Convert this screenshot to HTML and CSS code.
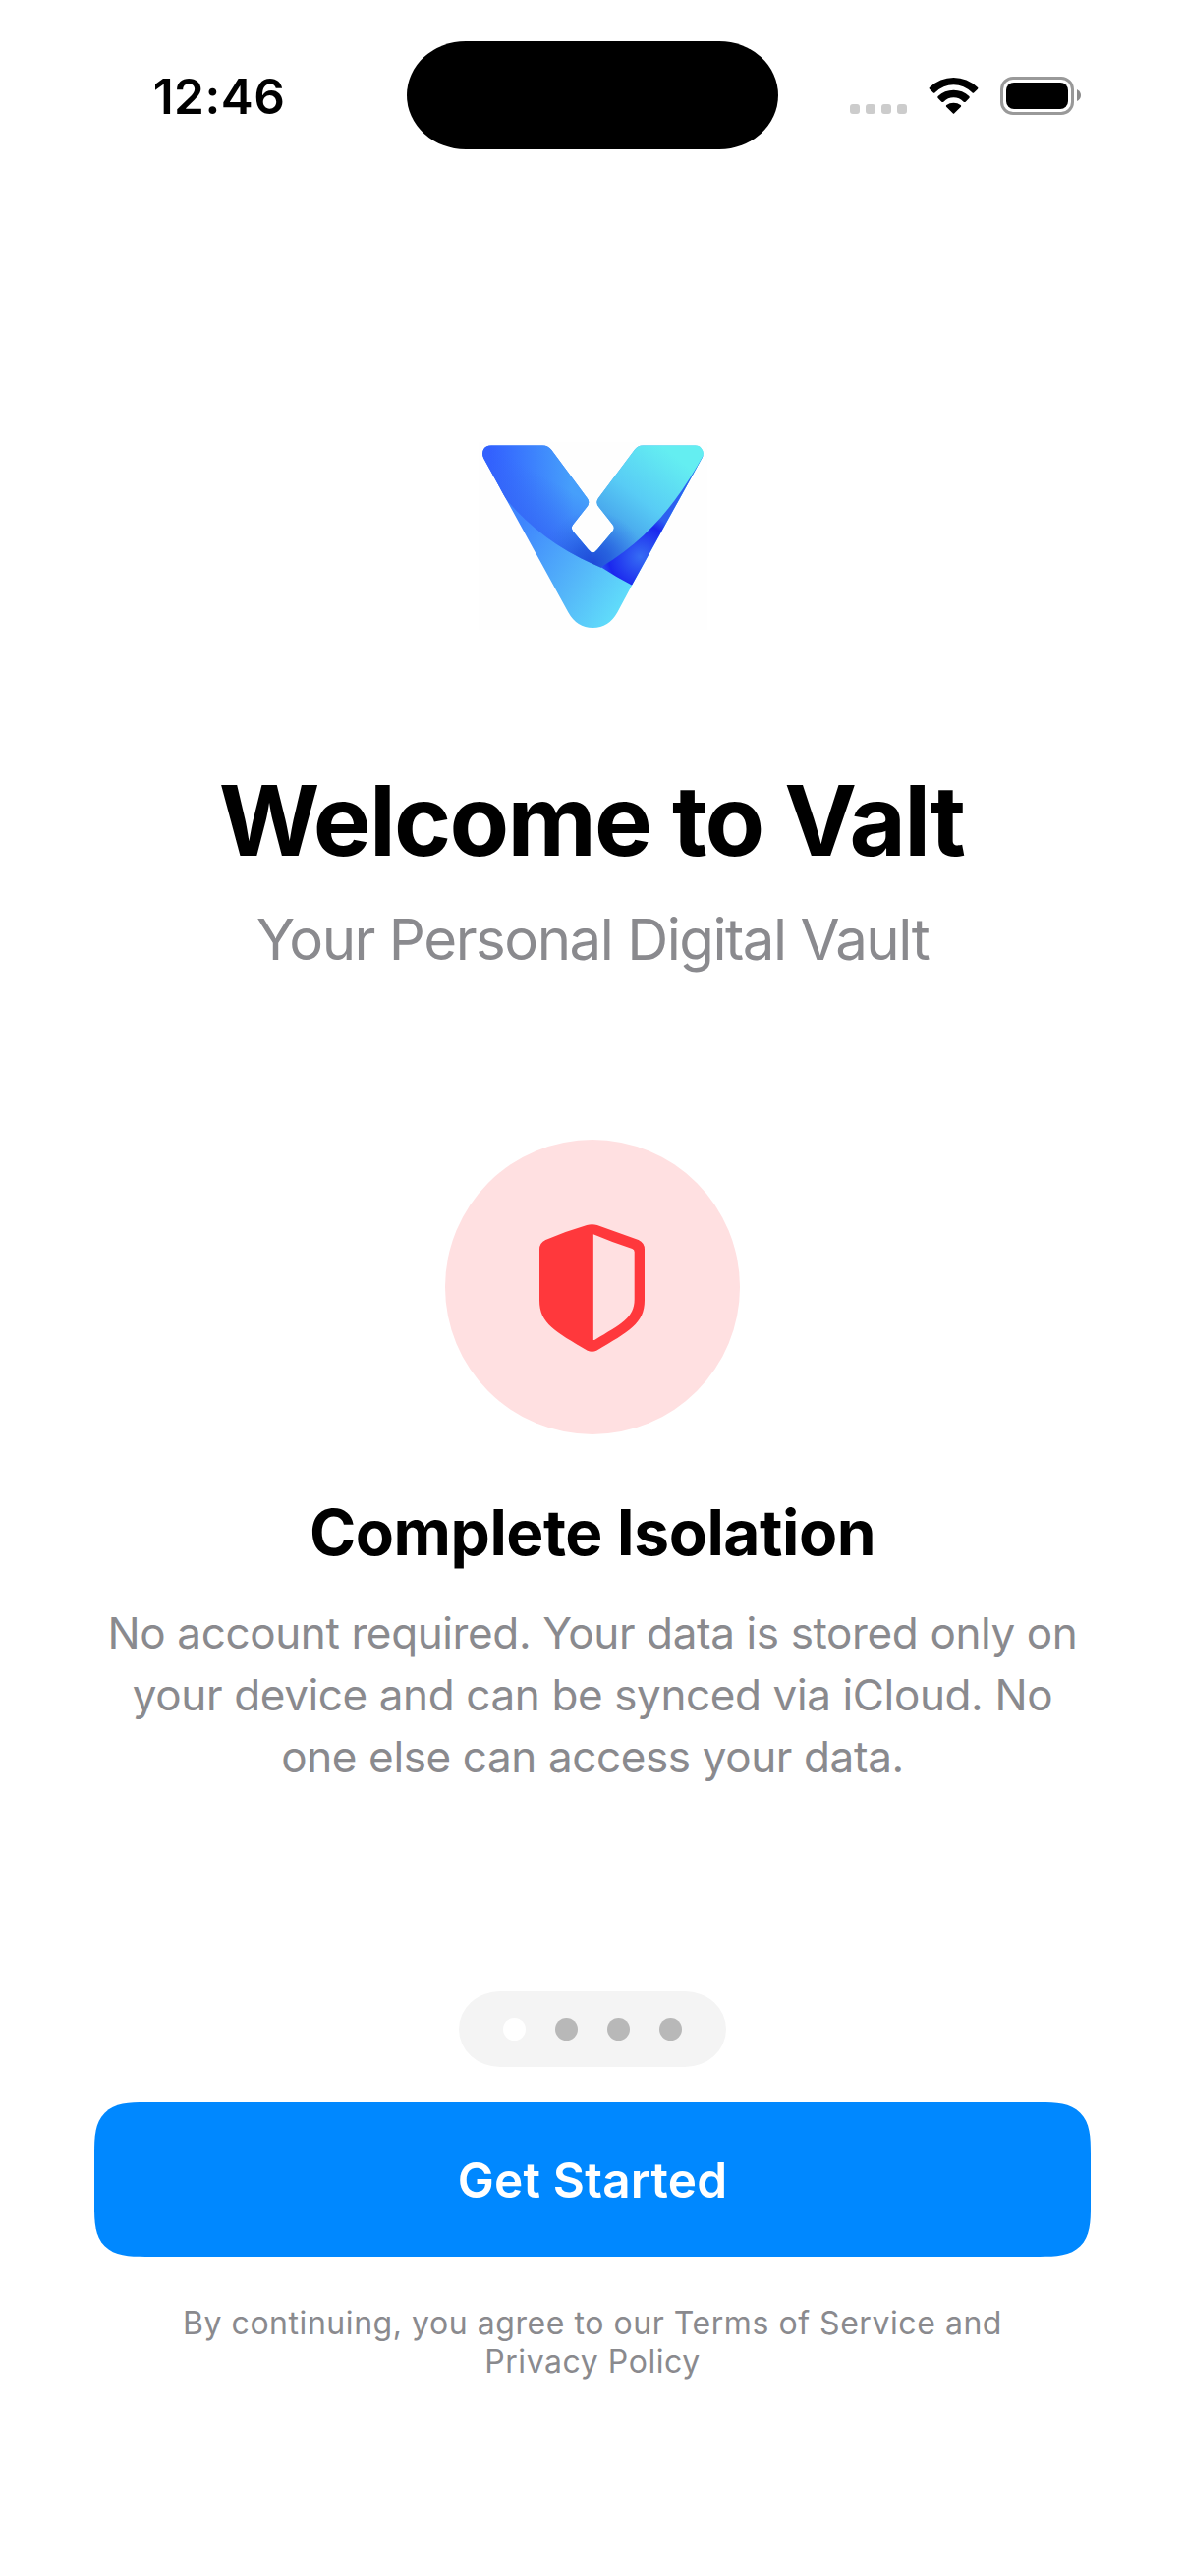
FILE: index.html
```html
<!DOCTYPE html>
<html lang="en">
<head>
    <meta charset="UTF-8">
    <meta name="viewport" content="width=device-width, initial-scale=1.0">
    <title>Welcome to Valt</title>
    <link rel="stylesheet" href="styles.css">
</head>
<body>
    <header class="status-bar">
        <span class="time">12:46</span>
        <div class="island"></div>
        <div class="status-icons">
            <div class="signal"><i></i><i></i><i></i><i></i></div>
            <svg class="wifi" viewBox="0 0 151 111">
                <path d="M2 30Q-1 32 2 35L13 46Q16 49 19 46Q44 22 75.500 22Q107 22 132 46Q135 49 138 46L149 35Q152 32 149 30Q117 0 75.500 0Q34 0 2 30Z"/>
                <path d="M28 57Q25 60 28 63L39 74Q42 76 45 74Q58 61 75.500 61Q93 61 106 74Q109 76 112 74L123 63Q126 60 123 57Q103 38 75.500 38Q48 38 28 57Z"/>
                <path d="M54 84Q51 87 54 90L73 109Q75.500 112 78 109L97 90Q100 87 97 84Q88 77 75.500 77Q63 77 54 84Z"/>
            </svg>
            <div class="battery"><div class="battery-level"></div></div>
            <svg class="battery-cap" viewBox="0 0 4 12"><path d="M0 0Q4 2 4 6Q4 10 0 12Z"/></svg>
        </div>
    </header>

    <main class="container">
        <svg class="logo" viewBox="51 60 699 573">
            <defs>
                <clipPath id="vShape">
                    <path d="M90 70H246Q263 70 274 84L383 231Q393 245 382 258L340 311Q331 322 340 333L386 388Q400 406 414 388L460 333Q469 322 460 311L418 258Q407 245 417 231L527 84Q537 70 554 70H712Q724 70 732 80Q741 91 735 106L520 496L475 580Q449 627 400 627Q351 627 325 580L67 110Q59 95 67 81Q75 70 90 70Z"/>
                </clipPath>
                <linearGradient id="base" gradientUnits="userSpaceOnUse" x1="170" y1="330" x2="500" y2="540">
                    <stop offset="0" stop-color="#3f86fd"/>
                    <stop offset="0.6" stop-color="#55b8f9"/>
                    <stop offset="1" stop-color="#60dcfa"/>
                </linearGradient>
                <linearGradient id="leftArm" gradientUnits="userSpaceOnUse" x1="90" y1="140" x2="330" y2="120">
                    <stop offset="0" stop-color="#3260ff"/>
                    <stop offset="1" stop-color="#469ffb"/>
                </linearGradient>
                <linearGradient id="leftShade" gradientUnits="userSpaceOnUse" x1="300" y1="190" x2="220" y2="330">
                    <stop offset="0" stop-color="#3468f5" stop-opacity="0"/>
                    <stop offset="1" stop-color="#3468f5" stop-opacity="0.8"/>
                </linearGradient>
                <radialGradient id="fold" gradientUnits="userSpaceOnUse" cx="400" cy="430" r="160">
                    <stop offset="0" stop-color="#1e4ad8"/>
                    <stop offset="0.35" stop-color="#2156dc" stop-opacity="0.8"/>
                    <stop offset="1" stop-color="#2f70ea" stop-opacity="0"/>
                </radialGradient>
                <linearGradient id="rightArm" gradientUnits="userSpaceOnUse" x1="660" y1="110" x2="450" y2="370">
                    <stop offset="0" stop-color="#64eef1"/>
                    <stop offset="0.5" stop-color="#58ccf5"/>
                    <stop offset="1" stop-color="#4093e8"/>
                </linearGradient>
                <radialGradient id="wedge" gradientUnits="userSpaceOnUse" cx="545" cy="410" r="130">
                    <stop offset="0" stop-color="#366df4"/>
                    <stop offset="0.75" stop-color="#1b27ee"/>
                    <stop offset="1" stop-color="#2d5ff0"/>
                </radialGradient>
            </defs>
            <rect class="logo-bg" x="51" y="60" width="699" height="573"/>
            <g clip-path="url(#vShape)">
                <rect x="51" y="60" width="699" height="573" fill="url(#base)"/>
                <path d="M51 60H400V432Q245 363 140 240L51 120Z" fill="url(#leftArm)"/>
                <path d="M51 60H400V432Q245 363 140 240L51 120Z" fill="url(#leftShade)"/>
                <path d="M400 60H750V120Q620 330 425 443L400 432Z" fill="url(#rightArm)"/>
                <path d="M51 60H750V120Q620 330 425 443L400 432Q245 363 140 240L51 120Z" fill="url(#fold)"/>
                <path d="M738 100C668 225 580 350 425 442Q470 472 520 497L760 150Z" fill="url(#wedge)"/>
            </g>
        </svg>

        <h1>Welcome to Valt</h1>
        <p class="subtitle">Your Personal Digital Vault</p>

        <section class="feature">
            <div class="feature-icon">
                <svg class="shield" viewBox="327 317 322 391">
                    <path fill-rule="evenodd" d="M472 320Q488 315 504 320L630 365Q649 374 649 394V550C649 622 600 646 502 704Q488 711 474 704C376 646 327 622 327 550V394Q327 374 346 365Q410 338 472 320ZM492 348V672Q494 672 497 671C576 623 618 604 618 547V402Q618 394 611 392Q550 373 492 348Z"/>
                </svg>
            </div>
            <h2>Complete Isolation</h2>
            <p class="description">No account required. Your data is stored only on<br>your device and can be synced via iCloud. No<br>one else can access your data.</p>
        </section>

        <div class="page-dots">
            <i class="active"></i><i></i><i></i><i></i>
        </div>

        <button class="start-button">Get Started</button>

        <p class="terms">By continuing, you agree to our Terms of Service and<br>Privacy Policy</p>
    </main>
</body>
</html>
```

FILE: styles.css
```css
* {
    box-sizing: border-box;
}

body {
    margin: 0;
    background-color: #fff;
    color: #000;
    font-family: Inter, "Liberation Sans", sans-serif;
}

h1, h2, p {
    margin: 0;
    text-align: center;
}

.status-bar {
    display: grid;
    grid-template-columns: 414px 378px 1fr;
    height: 195px;
    padding-top: 42px;
}

.time {
    padding-left: 32px;
    font-size: 49.5px;
    font-weight: 600;
    letter-spacing: 0.5px;
    line-height: 112px;
    text-align: center;
}

.island {
    height: 110px;
    background-color: #000;
    border-radius: 60px / 55px;
}

.status-icons {
    display: flex;
    align-items: flex-end;
    height: 75px;
    padding-left: 73px;
}

.signal {
    display: flex;
    gap: 6px;
    margin: 0 22px 1px 0;
}

.signal i {
    width: 10px;
    height: 10px;
    border-radius: 3px;
    background-color: #ccc;
}

.wifi {
    width: 51px;
    height: 37px;
    margin: 0 22px 1px 0;
}

.battery {
    width: 75px;
    height: 39px;
    padding: 3px;
    border: 3px solid #999;
    border-radius: 13px;
}

.battery-level {
    height: 27px;
    border-radius: 8px;
    background-color: #000;
}

.battery-cap {
    width: 4px;
    height: 12px;
    margin: 0 0 14px 3px;
    fill: #8c8c8c;
}

.container {
    display: flex;
    flex-direction: column;
    align-items: center;
    padding: 255px 96px 0;
}

.logo {
    width: 233px;
    height: 191px;
}

.logo-bg {
    fill: #fefefe;
}

h1 {
    margin-top: 134px;
    padding-right: 2px;
    font-size: 99px;
    font-weight: 700;
    letter-spacing: -1.75px;
    line-height: 120px;
}

.subtitle {
    margin-top: 25px;
    color: #8a8a8e;
    font-size: 58.2px;
    letter-spacing: -1.5px;
    line-height: 72px;
}

.feature {
    display: flex;
    flex-direction: column;
    align-items: center;
    margin-top: 168px;
    white-space: nowrap;
}

.feature-icon {
    display: flex;
    align-items: center;
    justify-content: center;
    width: 300px;
    height: 300px;
    padding: 1px 1px 0 0;
    border-radius: 50%;
    background-color: #ffe0e1;
}

.shield {
    width: 107px;
    height: 130px;
    fill: #ff383c;
}

h2 {
    margin-top: 61px;
    font-size: 64px;
    font-weight: 700;
    letter-spacing: -0.45px;
    line-height: 78px;
}

.description {
    margin-top: 32px;
    color: #8a8a8e;
    font-size: 44px;
    letter-spacing: -0.38px;
    line-height: 63px;
}

.page-dots {
    display: flex;
    align-items: center;
    justify-content: center;
    gap: 30px;
    width: 272px;
    height: 77px;
    margin-top: 207px;
    border-radius: 42px / 38.5px;
    background-color: #f4f4f4;
}

.page-dots i {
    width: 23px;
    height: 23px;
    border-radius: 50%;
    background-color: #b8b8b8;
}

.page-dots .active {
    background-color: #fff;
}

.start-button {
    width: 1014px;
    height: 157px;
    margin-top: 36px;
    padding: 0;
    border: none;
    border-radius: 38px;
    background-color: #08f;
    color: #fff;
    font-family: inherit;
    font-size: 49.5px;
    font-weight: 600;
    letter-spacing: 0.2px;
}

@supports (corner-shape: superellipse(1.6)) {
    .start-button {
        border-radius: 52px;
        corner-shape: superellipse(1.6);
    }
}

.terms {
    margin-top: 48px;
    color: #8a8a8e;
    font-size: 32px;
    letter-spacing: 0.55px;
    line-height: 39px;
    white-space: nowrap;
}
```
